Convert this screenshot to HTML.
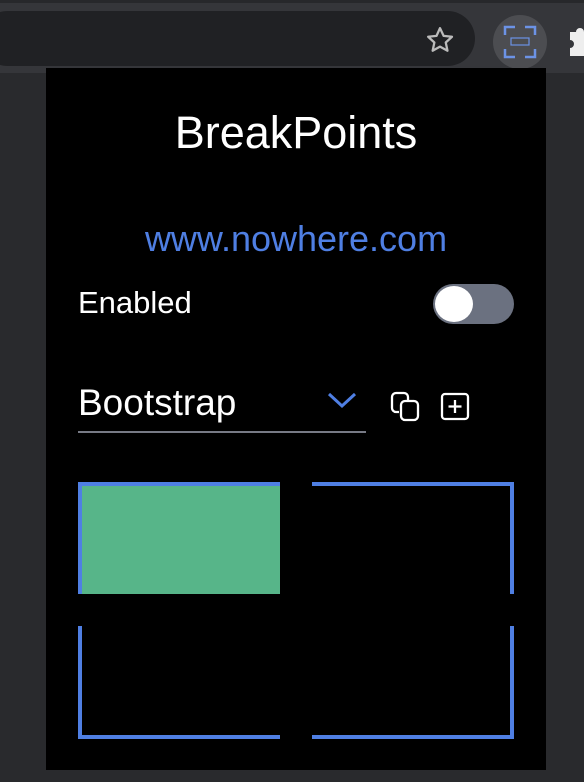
<!DOCTYPE html><html><head><style>
body{margin:0;width:584px;height:782px;background:#292a2d;position:relative;overflow:hidden;font-family:"Liberation Sans",sans-serif}
.tb{position:absolute;left:0;top:0;width:584px;height:73px;background:#35363a;border-top:3px solid #27282b;box-sizing:border-box}
.omni{position:absolute;left:-20px;top:11px;width:495px;height:55px;background:#202124;border-radius:28px}
.pop{position:absolute;left:46px;top:68px;width:500px;height:702px;background:#000}
.t{position:absolute;color:#fff;white-space:nowrap}
.b{position:absolute;border:0 solid #4f7fe3;box-sizing:border-box}
</style></head><body>
<div class="tb"></div>
<div class="omni"></div>
<svg style="position:absolute;left:424px;top:25px" width="32" height="30" viewBox="0 0 24 24"><path d="M12 2.5l2.9 6.2 6.7.7-5 4.6 1.4 6.6L12 17.3l-5.9 3.3 1.4-6.6-5-4.6 6.7-.7z" fill="none" stroke="#bbb" stroke-width="1.8" stroke-linejoin="round"/></svg>
<div style="position:absolute;left:493px;top:15px;width:54px;height:54px;border-radius:50%;background:#4c4d51"></div>
<svg style="position:absolute;left:503px;top:25px" width="34" height="34" viewBox="0 0 34 34" fill="none" stroke="#6c93e6" stroke-width="2.5"><path d="M2 10V2h10M22 2h10v8M2 24v8h10M22 32h10v-8"/><rect x="8" y="13" width="18" height="7" stroke-width="1.2"/></svg>
<svg style="position:absolute;left:568px;top:24px" width="20" height="34" viewBox="0 0 20 34"><path d="M2 8h6a4 4 0 0 1 8 0h4v24H2v-8a4 4 0 0 0 0-8z" fill="#eee"/></svg>
<div class="pop"></div>
<div class="t" style="left:0;width:592px;text-align:center;top:107px;font-size:45px">BreakPoints</div>
<div class="t" style="left:0;width:592px;text-align:center;top:218px;font-size:36px;color:#4f7fe3">www.nowhere.com</div>
<div class="t" style="left:78px;top:285px;font-size:31px">Enabled</div>
<div style="position:absolute;left:433px;top:284px;width:81px;height:40px;border-radius:20px;background:#6b7180"></div>
<div style="position:absolute;left:435px;top:286px;width:38px;height:36px;border-radius:50%;background:#fff"></div>
<div class="t" style="left:78px;top:382px;font-size:37px">Bootstrap</div>
<div style="position:absolute;left:78px;top:431px;width:288px;height:2px;background:#777a85"></div>
<svg style="position:absolute;left:326px;top:390px" width="32" height="20" viewBox="0 0 32 20"><path d="M3 4l13 12 13-12" fill="none" stroke="#4f7fe3" stroke-width="3"/></svg>
<svg style="position:absolute;left:389px;top:390px" width="34" height="34" viewBox="0 0 34 34" fill="none" stroke="#fff" stroke-width="2.3"><path d="M10 22H7a4 4 0 0 1-4-4V7a4 4 0 0 1 4-4h8a4 4 0 0 1 4 4v3"/><rect x="12" y="11" width="17" height="19" rx="4"/></svg>
<svg style="position:absolute;left:440px;top:392px" width="30" height="30" viewBox="0 0 30 30" fill="none" stroke="#fff" stroke-width="2.3"><rect x="2" y="2" width="26" height="25" rx="3"/><path d="M15 8v13M8.5 14.5h13"/></svg>
<div class="b" style="left:78px;top:482px;width:202px;height:112px;background:#57b589;border-top-width:4px;border-left-width:4px"></div>
<div class="b" style="left:312px;top:482px;width:202px;height:112px;border-top-width:4px;border-right-width:4px"></div>
<div class="b" style="left:78px;top:626px;width:202px;height:113px;border-bottom-width:4px;border-left-width:4px"></div>
<div class="b" style="left:312px;top:626px;width:202px;height:113px;border-bottom-width:4px;border-right-width:4px"></div>
</body></html>
